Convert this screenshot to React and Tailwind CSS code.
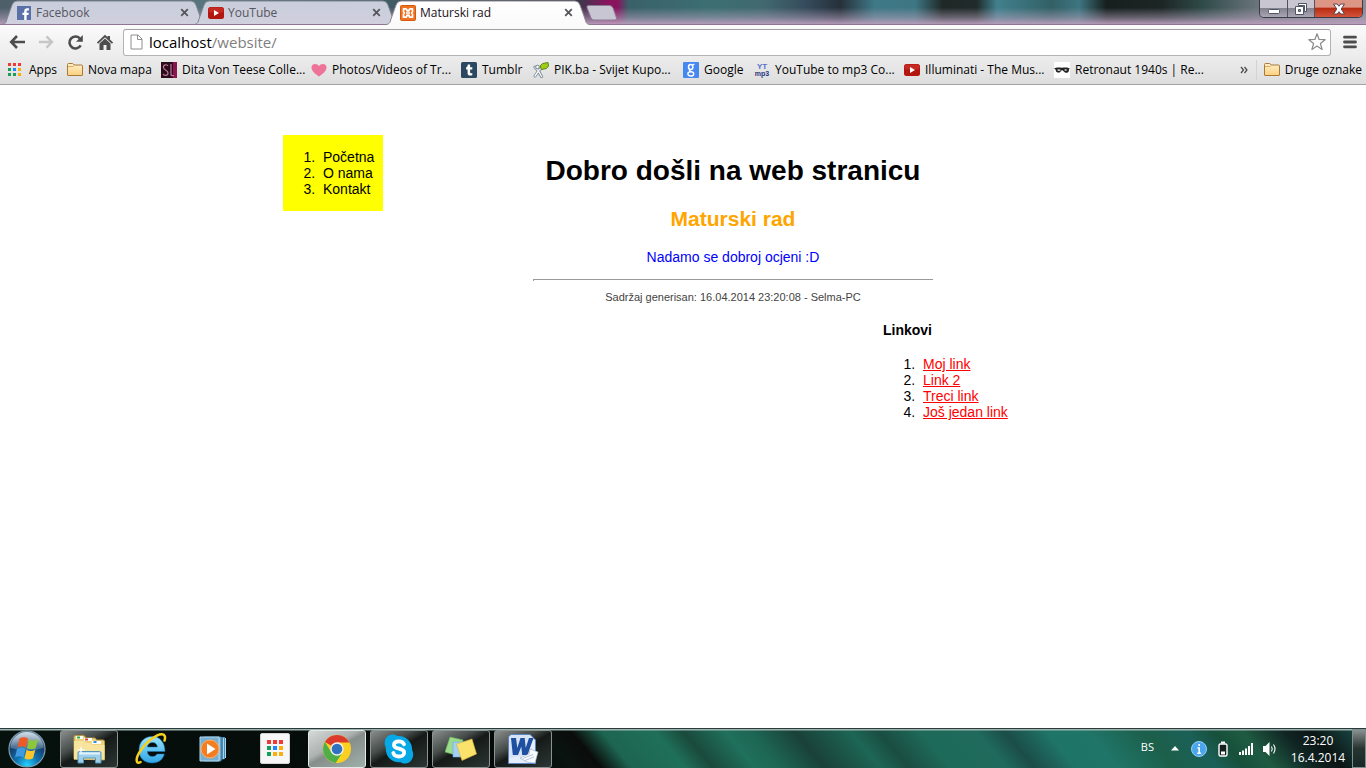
import React from "react";

const YouTubeIcon = () => (
  <svg width="16" height="16" viewBox="0 0 16 16" className="shrink-0">
    <rect x="0" y="2" width="16" height="12" rx="2.5" fill="#b3150f" />
    <rect x="0.5" y="2.5" width="15" height="5" rx="2" fill="#c42a22" />
    <path d="M6 5l5 3-5 3z" fill="#fff" />
  </svg>
);

const FacebookIcon = () => (
  <svg width="16" height="16" viewBox="0 0 16 16" className="shrink-0">
    <rect x="1" y="1" width="14" height="14" fill="#5a70a8" />
    <path d="M8.2 15V10H6.4V7.8h1.8V6.2C8.2 4.2 9.3 3.2 11.3 3.2h1.6v2.2h-1.2c-.9 0-1.1.4-1.1 1.1v1.3h2.2L12.5 10h-1.9v5z" fill="#fff" />
  </svg>
);

const XamppIcon = () => (
  <svg width="16" height="16" viewBox="0 0 16 16" className="shrink-0">
    <rect x="0.5" y="0.5" width="15" height="15" rx="1" fill="#ef7223" stroke="#d9590f" />
    <path
      d="M3.500 3.800H5.500Q7 3.800 7 5.800H9Q9 3.800 10.500 3.800H12.500V7L11.500 8L12.500 9V12.200H10.500Q9 12.200 9 10.200H7Q7 12.200 5.500 12.200H3.500V9L4.500 8L3.500 7z"
      fill="none"
      stroke="#fff"
      strokeWidth="1.700"
      strokeLinejoin="round"
    />
    <path d="M6 8h4" stroke="#fff" strokeWidth="1.500" />
  </svg>
);

const AppsIcon = () => (
  <svg width="16" height="16" viewBox="0 0 16 16" className="shrink-0">
    <path d="M0 1h3v3H0zM5 1h3v3H5zM10 1h3v3h-3z" fill="#f03a33" />
    <path d="M0 6h3v3H0zM0 11h3v3H0zM5 11h3v3H5z" fill="#1a9b58" />
    <path d="M5 6h3v3H5z" fill="#1e88ff" />
    <path d="M10 6h3v3h-3zM10 11h3v3h-3z" fill="#fbae0c" />
  </svg>
);

const FolderIcon = () => (
  <svg width="16" height="16" viewBox="0 0 16 16" className="shrink-0">
    <defs>
      <linearGradient id="folder" x1="0" y1="0" x2="0" y2="1">
        <stop offset="0" stopColor="#fff1cd" />
        <stop offset="1" stopColor="#fbcf7c" />
      </linearGradient>
    </defs>
    <path d="M0.500 13V2.500q0-1 1-1h4q.700 0 1 .800l.300.700h7.700q1 0 1 1V13q0 .500-.500.500H1q-.500 0-.500-.500z" fill="url(#folder)" stroke="#a9793a" />
    <path d="M1 4.500h5.500" stroke="#e2ad5c" fill="none" />
  </svg>
);

const SlIcon = () => (
  <svg width="16" height="16" viewBox="0 0 16 16" className="shrink-0">
    <rect width="16" height="16" fill="#2c0b1c" />
    <rect x="12" width="4" height="16" fill="#8c1550" />
    <path d="M7 4C6 2 2 2.500 2.500 5.500S7 8 7 11s-4 3-5 1M10 2v11q1 1 3 .500" fill="none" stroke="#c07a9c" strokeWidth="1.200" />
  </svg>
);

const HeartIcon = () => (
  <svg width="16" height="16" viewBox="0 0 16 16" className="shrink-0">
    <path d="M8 14.500C3 11 .500 8.500.500 5.500.500 3.500 2 2 4 2c1.800 0 3.200.800 4 2.200C8.800 2.800 10.200 2 12 2c2 0 3.500 1.500 3.500 3.500 0 3-2.500 5.500-7.500 9z" fill="#ed7398" />
  </svg>
);

const TumblrIcon = () => (
  <svg width="16" height="16" viewBox="0 0 16 16" className="shrink-0">
    <rect width="16" height="16" rx="1.500" fill="#2c4762" />
    <path d="M6.800 2.500h2.300v2.700h2.200v2.200H9.100v3.100c0 .900.900 1 2.200.500v2.200c-2.700 1-4.700.200-4.700-2.200V7.400H5.100V5.500c1-.400 1.600-1.500 1.700-3z" fill="#fff" />
  </svg>
);

const PikIcon = () => (
  <svg width="16" height="16" viewBox="0 0 16 16" className="shrink-0">
    <path d="M2 5l3.500 4L2 14M5.500 8.500l3-2.500M6 10l2.500 4.500" fill="none" stroke="#71838f" strokeWidth="3" strokeLinecap="round" />
    <path d="M2 5l3.500 4L2 14M5.500 8.500l3-2.500M6 10l2.500 4.500" fill="none" stroke="#f3f7fa" strokeWidth="1.500" strokeLinecap="round" />
    <circle cx="4.500" cy="5" r="1.800" fill="#fff" stroke="#71838f" />
    <path d="M7 4l2.500-2.500L15 .500l.500 3.500-2 2.500L8.500 7.500z" fill="#9fcc17" stroke="#5f8316" />
  </svg>
);

const GoogleIcon = () => (
  <svg width="16" height="16" viewBox="0 0 16 16" className="shrink-0">
    <rect width="16" height="16" rx="1" fill="#4788f0" />
    <ellipse cx="7.700" cy="5" rx="2.200" ry="2.500" fill="none" stroke="#fff" strokeWidth="1.500" />
    <path d="M9.500 3l2-1M7.500 7.700C5.500 8.500 7 9.300 8.500 9.700" fill="none" stroke="#fff" strokeWidth="1.200" />
    <ellipse cx="7.800" cy="11.900" rx="2.900" ry="2.100" fill="none" stroke="#fff" strokeWidth="1.400" />
  </svg>
);

const YtMp3Icon = () => (
  <span className="flex h-4 w-4 shrink-0 flex-col items-center justify-center font-['Liberation_Sans',sans-serif] text-[8px] leading-[7px] font-bold">
    <span className="text-[#5a6fce]">YT</span>
    <span className="text-[7px] text-[#26357f]">mp3</span>
  </span>
);

const MaskIcon = () => (
  <svg width="16" height="16" viewBox="0 0 16 16" className="shrink-0">
    <rect width="16" height="16" fill="#fff" />
    <path d="M0 6.500c2-1 4-1.200 8-.8 4-.6 6-.2 8 .8-1 .5-1 1-1.200 2.500-.3 2-3.300 2.500-5 .5-.6-.8-1.200-1.500-2-1.300-.9.300-1 1.800-2.200 2.200-2 .6-3.600-.4-3.800-2C1.700 7.500 1 7 0 6.500z" fill="#222" />
    <path d="M3 8q1.500-1.700 4 0-2 1.800-4 0zM10 8q1.500-1.500 3.500 0-2 1.500-3.500 0z" fill="#ddd" />
  </svg>
);

const tabs = [
  { title: "Facebook", Icon: FacebookIcon },
  { title: "YouTube", Icon: YouTubeIcon },
  { title: "Maturski rad", Icon: XamppIcon, active: true },
];

const bookmarks = [
  { label: "Apps", Icon: AppsIcon },
  { label: "Nova mapa", Icon: FolderIcon },
  { label: "Dita Von Teese Colle...", Icon: SlIcon },
  { label: "Photos/Videos of Tr...", Icon: HeartIcon },
  { label: "Tumblr", Icon: TumblrIcon },
  { label: "PIK.ba - Svijet Kupo...", Icon: PikIcon },
  { label: "Google", Icon: GoogleIcon },
  { label: "YouTube to mp3 Co...", Icon: YtMp3Icon },
  { label: "Illuminati - The Mus...", Icon: YouTubeIcon },
  { label: "Retronaut 1940s | Re...", Icon: MaskIcon },
];

function Tab({ title, Icon, active }) {
  return (
    <div className={active ? "relative z-10 -mr-3 h-[25px] w-[204px]" : "relative -mr-3 h-[25px] w-[204px]"}>
      <svg className="absolute inset-0" width="204" height="25" viewBox="0 0 204 25" aria-hidden="true">
        <defs>
          <linearGradient id="tabActive" x1="0" y1="0" x2="0" y2="1">
            <stop offset="0" stopColor="#ffffff" />
            <stop offset="1" stopColor="#fafafa" />
          </linearGradient>
          <linearGradient id="tabIdle" x1="0" y1="0" x2="0" y2="1">
            <stop offset="0" stopColor="#c9cedb" />
            <stop offset="1" stopColor="#d0d0de" />
          </linearGradient>
        </defs>
        <path
          d="M0 25C4 24 4 22 5 19L10 5Q11.500 1 15 1H189Q192.500 1 194 5L199 19C200 22 200 24 204 25z"
          fill={active ? "url(#tabActive)" : "url(#tabIdle)"}
        />
        <path
          d="M0 24.500C4 24 4 22 5 19L10 5Q11.500 1 15 1H189Q192.500 1 194 5L199 19C200 22 200 24 204 24.500"
          fill="none"
          stroke={active ? "#8f8592" : "#7f8592"}
        />
      </svg>
      <div className="relative flex h-full items-center gap-1 pr-[14px] pl-[14px]">
        <Icon />
        <span className={active ? "grow text-[12px] text-[#1b1020]" : "grow text-[12px] text-[#56565e]"}>{title}</span>
        <button type="button" aria-label={"Close " + title} className="flex h-4 w-4 items-center justify-center">
          <svg width="9" height="9" viewBox="0 0 9 9">
            <path d="M1.200 1.200l6.600 6.600M7.800 1.200L1.200 7.800" stroke="#55555a" strokeWidth="1.800" />
          </svg>
        </button>
      </div>
    </div>
  );
}

function WindowControls() {
  return (
    <div className="flex h-[18px] self-start overflow-hidden rounded-b-[5px] border border-t-0 border-[#3a3c46]">
      <button type="button" aria-label="Minimize" className="flex w-[28px] items-center justify-center border-r border-[#50525c] bg-linear-to-b from-[#c9c6d2] from-45% via-[#85838f] via-50% to-[#aaa5b4]">
        <svg width="14" height="14" viewBox="0 0 14 14">
          <rect x="1.500" y="7.500" width="11" height="4" rx="1" fill="#fff" stroke="#4d5566" />
        </svg>
      </button>
      <button type="button" aria-label="Restore" className="flex w-[27px] items-center justify-center border-r border-[#50525c] bg-linear-to-b from-[#c9c6d2] from-45% via-[#85838f] via-50% to-[#aaa5b4]">
        <svg width="14" height="14" viewBox="0 0 14 14">
          <path d="M4.500 1.500h8v8h-2v-6h-6z" fill="#fff" stroke="#4d5566" />
          <path d="M1.500 4.500h8v8h-8z" fill="#fff" stroke="#4d5566" />
          <path d="M4.500 7.500h2v2h-2z" fill="#999" stroke="#4d5566" />
        </svg>
      </button>
      <button type="button" aria-label="Close" className="flex w-[47px] items-center justify-center bg-linear-to-b from-[#dd9585] from-40% via-[#b82c12] via-50% to-[#d4533a]">
        <svg width="14" height="14" viewBox="0 0 14 14">
          <path d="M1.500 2h3.700L7 4.300 8.800 2h3.700L9.200 7l3.300 5H8.800L7 9.700 5.200 12H1.500L4.800 7z" fill="#fff" stroke="#5b4650" />
        </svg>
      </button>
    </div>
  );
}

function TitleBar() {
  return (
    <div className="relative flex h-[25px] justify-between bg-[linear-gradient(to_right,#4d5f69_0%,#57757c_15%,#3f5a62_30%,#2c4046_42%,#8a135e_44.5%,#8a135e_45.2%,#3a606a_46%,#3c6f72_52%,#41686f_56%,#354b5c_59%,#26303a_61.500%,#3f7886_64%,#3e7683_67%,#1f2826_69%,#1f2b2a_71.500%,#41808d_73%,#326066_77%,#3e7580_79%,#161f1d_81%,#1c2624_85%,#2f4a48_88%,#69747b_92%,#8d8c99_100%)]">
      <div className="absolute inset-0 bg-linear-to-b from-transparent from-30% via-[#b29fb9]/50 via-70% to-[#bb9fbe]" />
      <div className="relative flex pl-[2px]">
        {tabs.map((t) => (
          <Tab key={t.title} {...t} />
        ))}
        <button type="button" aria-label="New tab" className="ml-[7px] flex pt-[5px]">
          <svg width="34" height="16" viewBox="0 0 34 16">
            <path d="M3.500.500H24.500Q27 .500 28 3L31.500 13Q32 15 30 15H9Q7 15 6 13L2 2.500Q1.500.500 3.500.500z" fill="#c9c6d4" stroke="#8a7c94" />
          </svg>
        </button>
      </div>
      <div className="relative pr-[3px]">
        <WindowControls />
      </div>
      <div className="absolute inset-x-0 bottom-0 h-px bg-[#8f7794]" />
    </div>
  );
}

function Toolbar() {
  return (
    <div className="flex h-8 items-center bg-linear-to-b from-[#fbfbfb] to-[#ececec] px-2 pt-[2px]">
      <button type="button" aria-label="Back" className="mr-3">
        <svg width="18" height="16" viewBox="0 0 18 16">
          <path d="M9 2L3.200 8 9 14M3.500 8H17" fill="none" stroke="#4d4d4d" strokeWidth="2.600" />
        </svg>
      </button>
      <button type="button" aria-label="Forward" className="mr-3">
        <svg width="17" height="16" viewBox="0 0 18 16">
          <path d="M9 2l5.800 6L9 14M14.500 8H1" fill="none" stroke="#c6c6c6" strokeWidth="2.600" />
        </svg>
      </button>
      <button type="button" aria-label="Reload" className="mr-3">
        <svg width="17" height="17" viewBox="0 0 17 17">
          <path d="M13.700 11.400A6 6 0 1 1 12.800 4.300" fill="none" stroke="#4d4d4d" strokeWidth="2.600" />
          <path d="M15.800 1v6.800H9z" fill="#4d4d4d" />
        </svg>
      </button>
      <button type="button" aria-label="Home" className="mr-[9px]">
        <svg width="18" height="17" viewBox="0 0 18 17">
          <path d="M11.500 2H14v4l-2.500-2z" fill="#4d4d4d" />
          <path d="M1.500 9.200L9 2l7.500 7.200" fill="none" stroke="#4d4d4d" strokeWidth="1.800" />
          <path d="M3.500 9.500L9 4.500l5.500 5V16h-4v-5h-3v5h-4z" fill="#4d4d4d" />
        </svg>
      </button>
      <label className="relative flex h-[27px] grow items-center rounded-[3px] border border-[#b3b3b3] border-t-[#a0a0a0] bg-white px-1">
        <svg width="16" height="16" viewBox="0 0 16 16" className="shrink-0">
          <path d="M3 1h7l4 4v10H3z" fill="#fff" stroke="#8e8e8e" />
          <path d="M9.500 1v4.500H14" fill="none" stroke="#8e8e8e" />
        </svg>
        <span className="pointer-events-none absolute left-[25px] text-[15px] text-black">
          localhost<span className="text-[#808080]">/website/</span>
        </span>
        <input
          type="text"
          aria-label="Address"
          defaultValue="localhost/website/"
          className="h-full w-full bg-transparent pl-1 text-[15px] text-transparent outline-none"
        />
        <svg width="18" height="18" viewBox="0 0 18 18" className="shrink-0">
          <path d="M9 .800l2.100 5.700 6 .200-4.700 3.800 1.700 5.900L9 13l-5.100 3.400 1.700-5.900L.900 6.700l6-.200z" fill="#fff" stroke="#8a8a8a" strokeWidth="1.200" strokeLinejoin="round" />
        </svg>
      </label>
      <button type="button" aria-label="Menu" className="ml-3 pr-px">
        <svg width="14" height="14" viewBox="0 0 14 14">
          <path d="M1.500 2.200h11M1.500 7h11M1.500 11.800h11" stroke="#4d4d4d" strokeWidth="2.800" strokeLinecap="round" />
        </svg>
      </button>
    </div>
  );
}

function BookmarkBar() {
  return (
    <nav className="flex h-[28px] items-center border-b border-[#a3a3a3] bg-linear-to-b from-[#ececec] to-[#dedede] pr-1 pb-px pl-2 text-[12px] whitespace-nowrap text-black">
      <div className="grid grow grid-cols-[59px_94px_150px_150px_72px_150px_71px_150px_150px_150px] items-center">
        {bookmarks.map(({ label, Icon }) => (
          <a key={label} href="#" className="flex items-center gap-[5px]">
            <Icon />
            {label}
          </a>
        ))}
      </div>
      <button type="button" aria-label="More bookmarks" className="px-2">
        <svg width="8" height="8" viewBox="0 0 8 8">
          <path d="M1 1l2.500 3L1 7M4.500 1L7 4 4.500 7" fill="none" stroke="#444" strokeWidth="1.200" />
        </svg>
      </button>
      <span className="mr-[7px] h-5 w-px bg-[#cdd5da]" />
      <a href="#" className="flex items-center gap-[5px]">
        <FolderIcon />
        Druge oznake
      </a>
    </nav>
  );
}

const links = ["Moj link", "Link 2", "Treci link", "Još jedan link"];

function WebPage() {
  return (
    <main className="grow bg-white pt-[50px] font-['Liberation_Sans',Arial,sans-serif] text-[14px] leading-4 text-black">
      <div className="mx-auto flex w-full max-w-[800px] flex-col">
        <div className="flex items-start gap-[150px]">
          <ol className="w-[100px] list-decimal bg-[#ffff00] py-[14px] pl-9">
            <li className="pl-1">Početna</li>
            <li className="pl-1">O nama</li>
            <li className="pl-1">Kontakt</li>
          </ol>
          <div className="w-[400px] pt-5 text-center">
            <h1 className="text-[28px] leading-8 font-bold">Dobro došli na web stranicu</h1>
            <h2 className="mt-5 text-[21px] leading-6 font-bold text-[#ffa500]">Maturski rad</h2>
            <p className="mt-[18px] text-[#0000ff]">Nadamo se dobroj ocjeni :D</p>
            <hr className="mt-[14px] border-0 border-t border-l border-[#9a9a9a] pb-px" />
            <p className="mt-[10px] text-[11px] leading-3 text-[#444444]">Sadržaj generisan: 16.04.2014 23:20:08 - Selma-PC</p>
          </div>
        </div>
        <div className="mt-[19px] w-[200px] self-end">
          <h4 className="font-bold">Linkovi</h4>
          <ol className="mt-[18px] list-decimal pl-9">
            {links.map((l) => (
              <li key={l} className="pl-1">
                <a href="#" className="text-[#ff0000] underline">
                  {l}
                </a>
              </li>
            ))}
          </ol>
        </div>
      </div>
    </main>
  );
}

const StartOrb = () => (
  <svg width="40" height="40" viewBox="0 0 40 40">
    <defs>
      <radialGradient id="orb" cx="0.500" cy="0.950" r="0.900">
        <stop offset="0" stopColor="#25d5ff" />
        <stop offset="0.350" stopColor="#1173b2" />
        <stop offset="0.700" stopColor="#123e6c" />
        <stop offset="1" stopColor="#4d7698" />
      </radialGradient>
      <linearGradient id="orbShine" x1="0" y1="0" x2="0" y2="1">
        <stop offset="0" stopColor="#fff" stopOpacity="0.750" />
        <stop offset="1" stopColor="#fff" stopOpacity="0.150" />
      </linearGradient>
    </defs>
    <circle cx="20" cy="20" r="18" fill="url(#orb)" stroke="#7e9cad" strokeWidth="1.200" />
    <path d="M3.500 19A16.500 16 0 0 1 36.500 19Q20 24 3.500 19z" fill="url(#orbShine)" />
    <path d="M12.500 9.500q4.500-2.500 8.500 0l-2 9q-4-2.300-8.500 0z" fill="#ee5a25" />
    <path d="M22 10.200q4 2.500 9 0l-2.300 9q-4.700 2.300-8.700 0z" fill="#8cc63a" />
    <path d="M10 20q4.500-2.400 8.500 0l-2 8.500q-4-2.300-8.500 0z" fill="#3e9be0" />
    <path d="M19.500 20.700q4 2.400 8.800 0l-2.200 8.500q-4.700 2.400-8.700 0z" fill="#fdc52b" />
  </svg>
);

const ExplorerIcon = () => (
  <svg width="34" height="32" viewBox="0 0 34 32">
    <path d="M2 26V4q0-1.500 1.500-1.500H12L14 5h9l1.500 2H31q1.500 0 1.500 1.500V27z" fill="#eed37c" stroke="#b9963e" />
    <path d="M4 3h7v3H4z" fill="#fff" />
    <path d="M5 3.500h3v2H5z" fill="#2fae3c" />
    <path d="M12 5h8v3h-8z" fill="#fff" />
    <path d="M13 5.500h3v2h-3z" fill="#dc4430" />
    <path d="M20 8h9v3h-9z" fill="#fff" />
    <path d="M21.500 8h3v2h-3z" fill="#2b8ddb" />
    <path d="M2 8h10l2 2h5l2 2h11.500v14.500H2z" fill="#f7e59f" />
    <path d="M6 30V20q0-1.500 1.500-1.500h20Q29 18.500 29 20v10h-5.500v-5h-12v5z" fill="#9ecfea" stroke="#5296bd" />
    <path d="M7 20.500h21" stroke="#dff3fc" strokeWidth="2" />
    <path d="M9 12l.8 4.200L14 17l-4.200.8L9 22l-.8-4.200L4 17l4.200-.8z" fill="#fff" />
  </svg>
);

const InternetExplorerIcon = () => (
  <svg width="34" height="34" viewBox="0 0 34 34">
    <defs>
      <linearGradient id="ie" x1="0" y1="0" x2="0" y2="1">
        <stop offset="0" stopColor="#9be4fd" />
        <stop offset="1" stopColor="#2ea6e6" />
      </linearGradient>
    </defs>
    <path
      d="M18 4.500C26 4.500 31 10.500 31 19.500H13.300C13.500 22.500 15.500 24.500 18.500 24.500c2.200 0 3.700-1 4.500-2.500h7.300C29 27.800 24.300 31 18 31 10.300 31 5 26 5 18S10.300 4.500 18 4.500zM13.400 15h10C23 12 21.200 10.500 18.500 10.500s-4.700 1.700-5.100 4.500z"
      fill="url(#ie)"
      stroke="#1272b4"
      strokeWidth="0.500"
    />
    <path d="M6.500 30C2 33 1 27 6 19.500 11.500 10 23 2 28 2.300c3 .200 3.700 3 2.500 6.200" fill="none" stroke="#f7cf1d" strokeWidth="2.500" strokeLinecap="round" />
  </svg>
);

const MediaPlayerIcon = () => (
  <svg width="28" height="26" viewBox="0 0 28 26">
    <path d="M8 1h18v22l-5 1z" fill="#4689b2" />
    <path d="M5 1h17v24H5z" fill="#8fc2e0" stroke="#3d7ca4" />
    <path d="M24.500 2v21M26.500 2v20" stroke="#a9d4eb" />
    <path d="M1 1h19v24H1z" fill="#78aed0" stroke="#b1d8ed" />
    <circle cx="11" cy="13" r="9" fill="#f47d20" stroke="#ffb066" />
    <path d="M8 7.500l8.500 5.500L8 18.500z" fill="#fff" />
  </svg>
);

const LauncherIcon = () => (
  <svg width="30" height="32" viewBox="0 0 30 32">
    <rect x="0.500" y="0.500" width="29" height="30" rx="1.500" fill="#f6f6f6" stroke="#d2d2d2" />
    <path d="M7 7h4v4H7zM13 7h4v4h-4zM19 7h4v4h-4z" fill="#f03a33" />
    <path d="M7 13h4v4H7zM7 19h4v4H7z" fill="#12a05b" />
    <path d="M13 13h4v4h-4z" fill="#1e88ff" />
    <path d="M19 13h4v4h-4zM13 19h4v4h-4zM19 19h4v4h-4z" fill="#fbae0c" />
  </svg>
);

const ChromeIcon = () => (
  <svg width="30" height="30" viewBox="0 0 30 30">
    <circle cx="15" cy="15" r="14" fill="#fbd120" />
    <path d="M15 15L2.900 8A14 14 0 0 1 27.300 8.400H15z" fill="#dc3a2c" />
    <path d="M2.900 8a14 14 0 0 0 10.800 20.900L20.500 18.500 15 15 9.300 18.300z" fill="#4fae48" />
    <circle cx="15" cy="15" r="6.700" fill="#f1f1f1" />
    <circle cx="15" cy="15" r="5.300" fill="#2f72bf" />
  </svg>
);

const SkypeIcon = () => (
  <svg width="30" height="30" viewBox="0 0 30 30">
    <path d="M8.500.500c2 0 3.500.500 4.700 1.500C21.500 1.200 28.500 7.500 28.200 16.200c2.800 5.500-.5 13.300-7.200 13.300-1.700 0-3.200-.5-4.500-1.300C8 29 1.300 22.500 1.800 13.800-1.300 7.500 2.500.500 8.500.500z" fill="#06a8e6" />
    <path d="M20 10.200c-1-2.200-2.800-2.900-5-2.900-3 0-5 1.300-5 3.600 0 5.200 10.200 2.400 10.200 7.500 0 2.600-2.400 4.100-5.300 4.100-2.700 0-4.800-1-5.600-3.500" fill="none" stroke="#fff" strokeWidth="3.800" strokeLinecap="round" />
  </svg>
);

const NotesIcon = () => (
  <svg width="32" height="26" viewBox="0 0 32 26">
    <path d="M5 1l13 3-4 16L0 16z" fill="#9adb8c" stroke="#6bb45e" strokeWidth="0.600" />
    <path d="M8 6h12v15H8z" fill="#a3d0f6" stroke="#72a6d6" strokeWidth="0.600" />
    <path d="M11.500 8L27 3l4.500 15L17 24.500z" fill="#fbe26a" stroke="#d9b637" strokeWidth="0.600" />
  </svg>
);

const WordIcon = () => (
  <svg width="32" height="30" viewBox="0 0 32 30">
    <path d="M4 .500h19L28.500 6v23.500H1.500V3z" fill="#e4edf8" stroke="#5d82c4" />
    <path d="M2 3L5 1h18v20L2 24z" fill="#d5e3f5" />
    <path d="M4 4h5l1.300 10L13.500 4h4.200l1 10L22 4h4.500l-6 17h-5.300l-.9-8.500L11 21H5.800z" fill="#1e4fa0" />
    <path d="M13 24l9-4 1-5 8 3-3 11-8-1z" fill="#fafcff" stroke="#9fb3d4" strokeWidth="0.700" />
    <path d="M16 24.500l10-4M18 26.500l9-3.500" stroke="#b3c3de" />
  </svg>
);

const taskItems = [
  { name: "Windows Explorer", Icon: ExplorerIcon, state: "open" },
  { name: "Internet Explorer", Icon: InternetExplorerIcon, state: "pinned" },
  { name: "Media Player", Icon: MediaPlayerIcon, state: "pinned" },
  { name: "Apps", Icon: LauncherIcon, state: "pinned" },
  { name: "Chrome", Icon: ChromeIcon, state: "active" },
  { name: "Skype", Icon: SkypeIcon, state: "open" },
  { name: "Sticky Notes", Icon: NotesIcon, state: "open" },
  { name: "Word", Icon: WordIcon, state: "open" },
];

const taskStyles = {
  open: "border-[#8c9392] bg-[linear-gradient(150deg,#8a8f8e_0%,#454b49_35%,#151a18_50%,#2c3634_100%)]",
  pinned: "border-transparent",
  active: "border-[#e4e8e7] bg-[linear-gradient(150deg,#d5d9d8_0%,#adb3b1_40%,#868e8b_50%,#a0b0ab_100%)]",
};

function TaskButton({ name, Icon, state }) {
  return (
    <button type="button" aria-label={name} className={"flex h-[38px] w-[58px] items-center justify-center rounded-[3px] border " + taskStyles[state]}>
      <Icon />
    </button>
  );
}

function TaskBar() {
  return (
    <footer className="flex h-10 items-center border-t border-[#2b3a3a] bg-[linear-gradient(to_bottom,#9db3ae_0px,#9db3ae_1px,transparent_2px),linear-gradient(50deg,#06110d_0%,#050907_37%,#0a1310_41%,#0a0c0b_43%,#1d6550_45.200%,#1f7059_49%,#1a4a3b_51%,#1f705c_54%,#1d6553_56%,#1a4139_59%,#1d6655_63%,#1a4d42_65%,#1e6a59_68%,#1f6a5c_72%,#1b4d48_74%,#1f7468_77%,#1f7568_80%,#1c5f4a_84%,#1b6058_87%,#17503b_89%,#1f5b42_91%,#102523_94%,#0b1514_96%,#1d5350_100%)] text-white">
      <button type="button" aria-label="Start" className="mr-3 ml-[7px] w-10">
        <StartOrb />
      </button>
      <div className="flex grow gap-1 pl-px">
        {taskItems.map((t) => (
          <TaskButton key={t.name} {...t} />
        ))}
      </div>
      <div className="flex items-center text-[12px] leading-[17px]">
        <span className="mr-[17px] pb-1 text-[11px]">BS</span>
        <svg width="8" height="5" viewBox="0 0 8 5" className="mr-3">
          <path d="M4 0l4 4.500H0z" fill="#fff" />
        </svg>
        <svg width="16" height="16" viewBox="0 0 16 16" className="mr-[10px]">
          <circle cx="8" cy="8" r="7.500" fill="#4ba6ee" stroke="#9ad0fa" />
          <path d="M8.200 3v2M6.500 7h1.700v5M6.300 12.200h3.800" fill="none" stroke="#fff" strokeWidth="1.600" />
        </svg>
        <svg width="12" height="16" viewBox="0 0 12 16" className="mr-[10px]">
          <rect x="4" y="0.500" width="4" height="2" fill="#fff" />
          <rect x="2" y="3" width="8" height="12" rx="1.500" fill="#14211f" stroke="#fff" strokeWidth="1.400" />
          <rect x="4" y="10.500" width="4" height="3" fill="#fff" />
        </svg>
        <svg width="15" height="12" viewBox="0 0 15 12" className="mr-2">
          <path d="M0 9h2v3H0zM3 7.500h2V12H3zM6 5.500h2V12H6zM9 3h2v9H9zM12 0h2v12h-2z" fill="#fff" />
        </svg>
        <svg width="16" height="16" viewBox="0 0 16 16" className="mr-[14px]">
          <path d="M1 5h2.500L7.500 1v14l-4-4H1z" fill="#fff" />
          <path d="M9.500 5.500q1.500 2.500 0 5M11.500 3.500q3 4.500 0 9" fill="none" stroke="#fff" strokeWidth="1.100" />
        </svg>
        <div className="mr-2 flex w-[52px] flex-col items-center">
          <span>23:20</span>
          <span>16.4.2014</span>
        </div>
        <button type="button" aria-label="Show desktop" className="h-[39px] w-[14px] border border-[#7d8f8d] bg-linear-to-b from-[#8b9291] via-[#283432] to-[#172826]" />
      </div>
    </footer>
  );
}

export default function App() {
  return (
    <div className="flex min-h-screen flex-col bg-white font-['Open_Sans','Noto_Sans',sans-serif]">
      <header>
        <TitleBar />
        <Toolbar />
        <BookmarkBar />
      </header>
      <WebPage />
      <TaskBar />
    </div>
  );
}
